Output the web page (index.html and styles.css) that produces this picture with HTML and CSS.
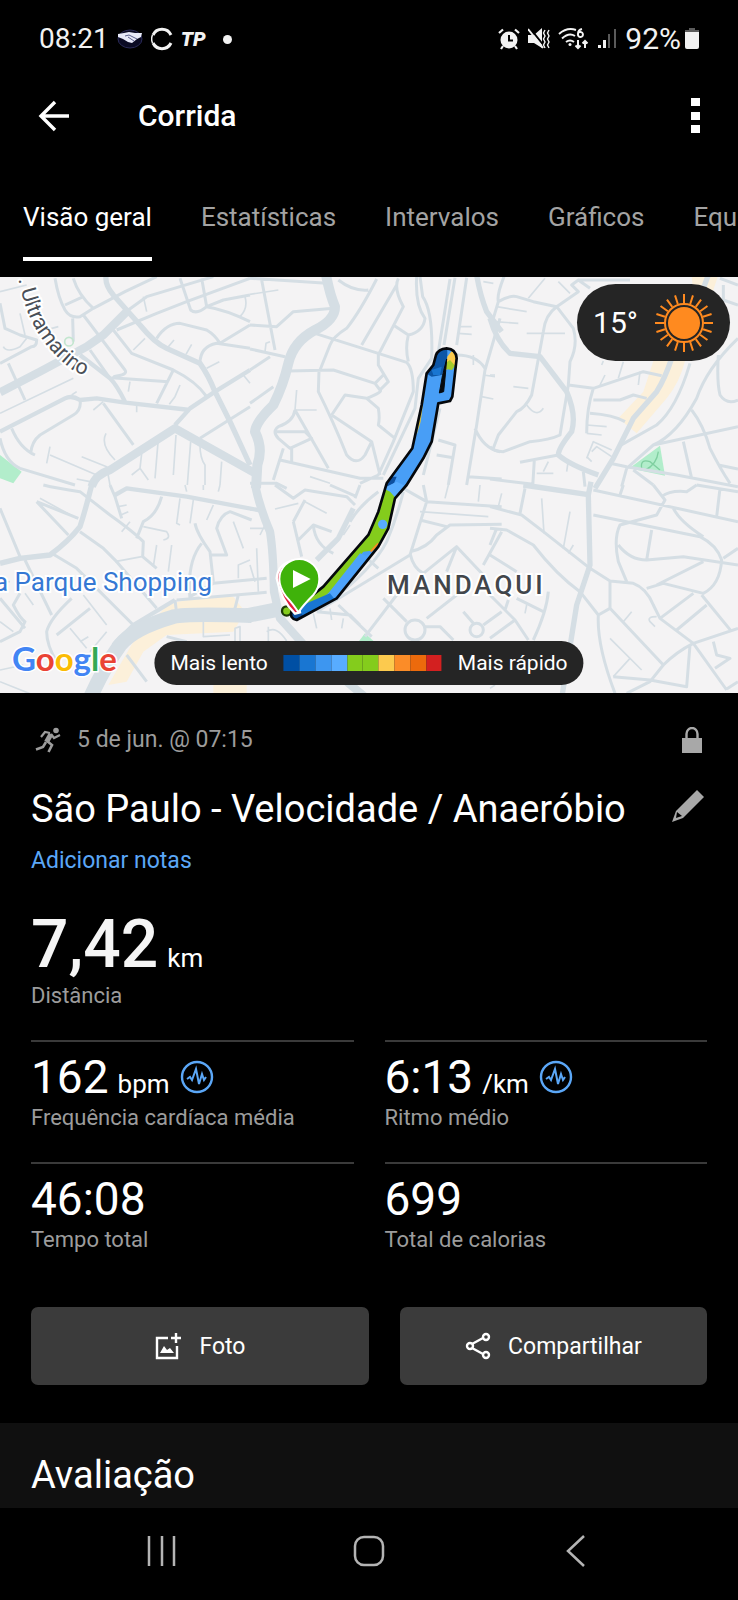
FILE: index.html
```html
<!DOCTYPE html>
<html lang="pt-BR">
<head>
  <meta charset="UTF-8">
  <meta name="viewport" content="width=device-width, initial-scale=1.0">
  <title>Corrida</title>
  <link rel="stylesheet" href="styles.css">
</head>
<body>
  <div class="status-bar">
    <div class="status-left">
      <span class="clock">08:21</span>
      <svg class="status-shake" width="26" height="20" viewBox="0 0 26 20">
        <ellipse cx="13" cy="10" rx="12" ry="9" fill="#0b0b24" stroke="#2b2b58" stroke-width="1"/>
        <path d="M1 5 L7 4 L12 3 L18 4 L25 4 L24 8 L20 10 L15 14 L11 13 L6 10 L1 8 Z" fill="#e8eafa"/>
        <path d="M8 7 L12 6 L20 10 M11 8 L17 12" fill="none" stroke="#5a5f8c" stroke-width="1"/>
      </svg>
      <svg width="22" height="24" viewBox="1 0 22 24" fill="none" stroke="#f2f2f2" stroke-width="3">
        <path d="M3 8 A10 10 0 0 1 21 8"/>
        <path d="M3 16 A10 10 0 0 0 21 16"/>
        <path d="M2.500 8 A10 10 0 0 0 2.500 16" stroke-width="1.500"/>
      </svg>
      <span class="tp">TP</span>
      <span class="dot"></span>
    </div>
    <div class="status-right">
      <svg width="22" height="22" viewBox="0 0 22 22">
        <circle cx="11" cy="12" r="8.500" fill="#f2f2f2"/>
        <path d="M1 5 L5 1.500 M21 5 L17 1.500 M5 18 L3 21 M17 18 L19 21" stroke="#f2f2f2" stroke-width="2.200"/>
        <path d="M11 7 V12.500 H15" fill="none" stroke="#000" stroke-width="2"/>
      </svg>
      <svg width="22" height="22" viewBox="0 0 22 22">
        <path d="M0 7 H6 L14 0 V20 L6 15 H0 Z" fill="#f2f2f2"/>
        <path d="M1 -1 L17 19" stroke="#000" stroke-width="2"/>
        <path d="M0 1 L15 20" stroke="#f2f2f2" stroke-width="2"/>
        <path d="M17 2 l-1.500 3 l1.500 3 l-1.500 3 l1.500 3 l-1.500 3 l1.500 3 M21 2 l-1.500 3 l1.500 3 l-1.500 3 l1.500 3 l-1.500 3 l1.500 3" fill="none" stroke="#f2f2f2" stroke-width="1.400"/>
      </svg>
      <svg width="31" height="22" viewBox="0 0 31 22" fill="none" stroke="#f2f2f2" stroke-width="2">
        <path d="M1 6 Q9 -1 18 2 M4 10.500 Q11 4 17 8 M8 14 Q12 11 16 14"/>
        <circle cx="12" cy="16.500" r="1.500" fill="#f2f2f2" stroke="none"/>
        <path d="M24 1 Q20 2 20 6 A2.500 2.500 0 1 0 21 4.500"/>
        <path d="M20 12 V20 M17.500 17.500 L20 20 L22.500 17.500 M27 20 V13 M24.500 15.500 L27 13 L29.500 15.500"/>
      </svg>
      <svg width="20" height="20" viewBox="0 0 20 20">
        <path d="M1 16h3v3H1z M6 11h3v8H6z" fill="#f2f2f2"/>
        <path d="M11 5h2v14h-2z M17 0h2v19h-2z" fill="#5a5a5a"/>
      </svg>
      <div class="battery">
        <span>92%</span>
        <svg width="14" height="22" viewBox="0 0 14 22">
          <path d="M4 0h6v2h4v4H0V2h4z" fill="#5c5c5c"/>
          <path d="M0 4H14V19Q14 21 12 21H2Q0 21 0 19Z" fill="#f2f2f2"/>
        </svg>
      </div>
    </div>
  </div>

  <header class="app-bar">
    <button class="icon-button" aria-label="Voltar">
      <svg width="32" height="32" viewBox="0 0 32 32" fill="none" stroke="#fff" stroke-width="3.400">
        <path d="M31 16 H3 M17 2 L3 16 L17 30"/>
      </svg>
    </button>
    <h1>Corrida</h1>
    <button class="icon-button" aria-label="Mais opções">
      <svg width="10" height="36" viewBox="0 0 10 36" fill="#fff">
        <path d="M1 0h9v8H1z M1 14h9v8H1z M1 27h9v8H1z"/>
      </svg>
    </button>
  </header>

  <nav class="tabs">
    <a class="tab active" href="#">Visão geral</a>
    <a class="tab" href="#">Estatísticas</a>
    <a class="tab" href="#">Intervalos</a>
    <a class="tab" href="#">Gráficos</a>
    <a class="tab" href="#">Equipamento</a>
  </nav>

  <section class="map">
    <svg class="map-canvas" viewBox="0 0 738 416">
      <defs>
        <path id="street" d="M48 -45 Q58 60 95 138 Q138 225 215 283 Q240 300 290 310"/>
        <clipPath id="route-clip">
          <path d="M590 220 Q565 222 558 240 L550 270 L530 295 L515 390 L487 520 L410 625 L385 710 L355 780 L220 935 L125 1010 Q118 1030 140 1035 L260 970 L385 815 L415 760 L435 670 L470 630 L520 550 L545 500 L565 385 L600 378 L607 365 L620 250 Q618 222 590 220 Z"/>
        </clipPath>
      </defs>

      <!-- north west -->
      <g class="tile" transform="translate(0 -2) scale(.33333)">
        <path class="park" d="M0 540 L65 590 L40 625 L0 610Z"/>
        <path class="lane" d="M0 415 L220 310 M0 50 L80 30 M10 215 Q20 235 60 215 L80 190 M60 115 L75 180 M120 170 L175 155 M540 330 L525 365 L508 388 M280 405 L310 380 M430 65 L440 110 M390 320 L385 350 M410 390 V412 M400 225 L435 190 M505 215 L522 195 M558 238 L575 208 M620 280 L658 260 M475 490 L465 610 M528 480 L520 600 M572 500 L562 630 M600 510 Q600 550 615 570 L615 630 M665 560 L660 630 M425 535 L420 580 L395 600 M420 580 L445 615 M318 475 Q300 510 345 555 M150 540 L290 600 M150 515 L140 565 M245 545 L320 575 L330 630 M215 360 L230 350 M735 65 Q745 100 720 125 M730 300 L750 325 M230 612 L270 620"/>
        <path class="road" d="M25 265 L75 375 M340 165 L395 235 L520 285 Q590 320 620 365 M250 120 L375 285 Q385 300 340 305 M270 225 L330 310 M335 308 L505 320 M520 285 L470 385 M310 385 L400 510 M165 10 Q175 70 195 105 Q210 130 240 125 L280 100 L375 50 L470 5 M220 10 Q235 60 280 100 M195 90 L250 65 M218 130 L220 200 M0 85 L15 160 L60 180 L110 195 Q110 215 95 215 L0 265 M350 165 L470 115 L560 80 L750 10 M385 105 L440 65 L640 5 M470 190 Q500 145 540 145 L620 165 Q645 180 660 205 L750 150 M600 265 Q600 215 650 205 L750 220 M540 10 L572 105 Q590 120 620 95 L605 10 M620 95 L670 75 L750 60 M620 95 Q680 105 750 140 M600 490 L750 395 M0 490 Q15 560 60 580 L225 630 M240 375 Q245 405 220 420 L120 480 Q95 500 92 535 M35 460 Q60 520 105 540"/>
        <path class="road wide" d="M0 470 L195 370 Q215 360 240 375 L290 370 L370 382 L570 405 M240 240 L330 310 Q350 330 375 380 M525 450 L570 400 L645 350 L750 285"/>
        <path class="road avenue" d="M318 5 Q315 30 340 60 L420 150 Q465 205 500 220 L600 265 Q625 300 645 350 L690 440 L750 570"/>
        <path class="road artery" d="M0 352 L120 290 L260 215 L310 180 L385 105 M275 635 Q285 600 330 585 L525 460 L775 600"/>
        <circle cx="207" cy="200" r="13" fill="none" stroke="#c3e6cf" stroke-width="5"/>
      </g>

      <!-- north centre -->
      <g class="tile" transform="translate(250 -2) scale(.33333)">
        <path class="lane" d="M0 58 L85 45 M45 230 L48 205 L60 200 M625 155 L665 155 M625 175 L665 178 M700 300 L735 305 M695 365 L730 372 M140 345 L135 405 L200 405 M670 270 V240 M180 605 L240 625 M700 20 L730 25"/>
        <path class="road" d="M0 10 L230 25 M35 15 L75 225 M0 150 L80 155 L130 110 L250 100 M0 222 L105 245 M0 285 L60 245 M0 385 L70 335 M195 175 L470 262 Q490 280 490 350 L430 500 L385 600 L330 625 M115 288 L250 285 L375 325 M207 288 L205 350 Q250 440 290 540 Q320 575 345 540 L365 500 M265 15 Q310 50 355 45 M380 12 Q330 110 290 160 Q250 185 240 210 L210 285 M440 30 L335 210 M445 10 Q430 40 460 95 L385 240 L385 270 L415 320 L390 345 L375 325 L400 300 M390 345 Q400 350 350 370 L285 360 L245 420 M350 370 L385 400 Q390 430 385 450 L435 490 M245 420 L365 500 L390 600 M430 150 L475 180 Q520 170 525 130 Q495 90 500 5 M475 180 Q465 220 475 260 M510 5 L518 65 Q550 110 545 250 L505 310 L495 400 L400 600 M600 12 L565 230 M615 8 L582 210 M650 8 L620 210 M620 240 Q680 240 705 280 M750 130 L705 285 L680 450 L650 630 M675 460 Q700 520 750 530 M135 405 L235 580 M135 405 Q130 440 85 455 Q65 470 85 490 L120 520 L185 490 L165 470 L80 470 M100 520 L70 615 M125 520 V560 M90 555 L330 610 L400 610 M0 625 L80 625 L110 640 M565 495 L615 510 L595 630 M560 540 L610 548 M570 400 L520 600 M655 605 L755 612"/>
        <path class="road avenue" d="M680 0 Q690 60 710 110 L755 170"/>
        <path class="road boulevard" d="M228 0 Q240 60 255 95 Q255 135 195 165 Q130 200 115 265 Q100 330 70 390 Q18 440 15 470 Q40 520 22 570 L18 640"/>
      </g>

      <!-- north east -->
      <g class="tile" transform="translate(490 -2) scale(.33333)">
        <path class="sand" d="M490 258 L585 258 Q570 320 530 370 L440 475 L385 430 L460 350Z M605 0 H685 L665 60 H610Z"/>
        <path class="park" d="M418 580 L510 512 L525 602Z"/>
        <path class="lane" d="M20 95 L110 110 M15 140 L85 145 M110 175 L225 175 M70 335 L115 340 M110 390 Q140 430 160 400 M450 290 L445 330 M290 450 L350 455 M290 475 L335 480 M340 258 L335 270 M345 300 L330 330 M400 260 L385 310 M115 70 L165 10 M205 20 L240 55 M0 300 H15 M290 550 L310 500 L365 525 M290 545 L305 560 M305 530 L320 515 L365 545 M175 560 L160 590 M140 595 L190 595 M230 590 L235 555"/>
        <path d="M455 580 Q450 550 480 560 L510 585 M465 585 Q500 570 505 530" fill="none" stroke="#7fcfa0" stroke-width="4"/>
        <path class="road" d="M42 5 Q20 60 25 80 L10 130 M25 80 Q60 60 80 65 L130 80 L200 95 Q165 120 160 170 L125 360 Q105 400 80 410 L25 480 L10 520 M200 95 L265 50 L245 30 L265 15 L300 40 M200 95 L250 160 Q265 210 240 260 L235 330 L210 480 Q180 495 120 500 L40 530 Q10 530 0 515 M235 330 L310 340 L460 290 L515 302 M310 340 Q290 400 290 475 M310 375 L390 375 L430 360 L470 370 M300 415 Q370 420 405 440 M600 265 Q560 400 500 450 L390 512 M744 190 Q650 280 620 370 Q560 480 490 510 L410 580 M490 510 L744 455 M685 240 Q680 320 690 360 Q710 390 744 375 M605 405 Q640 450 660 520 Q690 580 720 625 M580 500 L605 610 M360 565 L410 575 L560 600 L744 635 M410 580 L395 635 M430 585 L490 630 M685 570 L744 582 M90 562 L205 540 M133 555 L128 635 M280 590 L285 635 M0 612 L130 628 M265 15 L420 15 M700 30 V75 L744 90 M690 10 L744 30"/>
        <path class="road avenue" d="M0 130 Q20 200 60 235 L150 245 L230 350 Q260 420 245 470 Q205 520 205 540 Q240 570 325 600 M545 250 Q525 310 500 350 L430 430 L370 550 L315 640 M655 0 L640 40"/>
      </g>

      <!-- south west -->
      <g class="tile" transform="translate(0 208) scale(.33333)">
        <path class="sand" d="M500 362 Q560 335 700 335 L735 380 L700 440 L500 450 L430 500 L380 590 L325 600 L400 470Z M640 600 H740 V630 H640Z"/>
        <path class="lane" d="M120 40 L230 100 M430 125 L500 140 Q515 160 490 165 M345 230 L425 215 M540 40 L530 115 L540 120 M580 45 L570 115 M640 60 L620 105 M700 110 L730 190 M470 180 L460 245 M515 180 L505 260 M555 0 L560 20 M610 0 V15 M660 0 L655 20 M355 65 L380 60 M362 90 L385 80 M365 140 L390 110 M75 325 L100 360 M0 410 L40 440 M250 330 L320 420 M320 440 L270 500 M210 430 L260 490 M240 470 L265 455 M0 555 L70 540 M0 590 L100 630 M610 410 V455 L690 450 M0 290 H30 M705 470 V430 L720 425 V468 M750 225 L715 240 V280"/>
        <path class="road" d="M330 0 L345 35 L365 100 M130 0 Q170 10 240 20 L330 90 Q400 140 430 170 L428 215 L470 250 M110 50 L205 150 M110 50 L235 100 M485 35 Q470 90 430 110 L410 160 M240 140 L310 190 L350 230 L470 370 M155 205 L230 250 L290 310 L400 420 M75 225 L155 390 M0 70 L60 215 M570 340 Q560 230 605 175 M585 115 Q590 145 630 200 L640 290 M630 210 L680 210 L650 130 Q660 90 690 80 L755 105 M570 335 L640 295 L800 280 M530 345 L800 322 M0 340 L75 430 M60 325 L40 360 Q60 400 75 410 L60 440 L0 470 M215 340 Q150 400 140 440 Q140 480 170 530 M170 450 L270 370 M525 345 L530 385 M380 510 L440 590 M715 330 L705 370 L690 385 M500 455 L560 470"/>
        <path class="road wide" d="M345 30 L380 10 L560 35 L780 76 M525 345 L400 420 L340 480"/>
        <path class="road avenue" d="M275 0 Q255 80 240 125 Q205 170 150 210 L60 220 L0 235"/>
        <path class="road highway" d="M755 392 Q560 385 520 395 Q400 430 360 480 Q310 550 270 640"/>
      </g>

      <!-- south centre -->
      <g class="tile" transform="translate(250 208) scale(.33333)">
        <path class="park" d="M322 475 L345 445 L378 475Z"/>
        <path class="lane" d="M75 72 L145 55 M165 50 L230 85 M0 75 H30 M0 130 H50 M20 190 L25 320 M0 240 L15 290 M510 80 L715 95 M280 400 L275 430 M190 385 L200 430 M240 370 L245 405 M595 0 L585 40 M690 0 L685 50 M50 440 Q80 420 110 468 M55 425 V468 M300 120 L280 150 M30 150 L45 120"/>
        <path class="road" d="M75 0 L130 40 L165 15 L290 35 L315 60 M130 110 L165 45 M130 110 L155 215 M145 165 L190 120 L245 140 M190 120 Q195 180 250 205 M385 20 Q330 60 300 110 M330 0 L315 40 M240 0 L320 35 M460 20 Q440 100 410 170 Q370 250 240 350 M460 10 L530 50 L755 65 M530 50 L480 210 L200 380 M480 200 Q530 190 560 150 L600 120 L755 118 M510 105 L590 125 M520 0 L530 50 M480 205 Q490 250 520 265 L620 185 L700 270 M620 185 L590 260 M755 140 L700 240 M345 215 L385 250 M440 330 L345 455 M265 360 L365 455 M400 340 L470 410 M520 425 L570 425 L610 465 M700 420 L755 380 M640 380 L670 415 M530 400 L620 330 M200 380 L300 390 L330 420"/>
        <circle class="road" cx="495" cy="435" r="30"/>
        <circle class="road" cx="680" cy="435" r="20"/>
        <path class="road avenue" d="M310 70 L265 160 L200 225"/>
        <path class="road artery" d="M15 0 Q30 70 60 140 Q70 200 72 320 L90 400 L180 500 M290 590 L350 640"/>
        <path class="road highway" d="M-10 392 L90 372"/>
      </g>

      <!-- south east -->
      <g class="tile" transform="translate(490 208) scale(.33333)">
        <path class="lane" d="M35 25 L25 65 M155 40 L162 145 M240 80 L220 190 M235 205 L250 180 M400 410 L425 380 M360 460 L455 555 M420 520 L370 575 M500 395 Q470 395 480 410 L495 425 M110 360 L105 385 M0 610 L15 600"/>
        <path class="road" d="M310 15 L744 110 M310 90 L630 155 Q680 180 695 225 Q690 300 640 325 L520 295 L470 310 M0 65 L95 90 L160 140 L300 250 L360 288 L430 295 Q470 310 490 360 L510 400 L610 475 L710 615 M0 130 L50 135 L130 180 Q200 270 270 320 L325 390 Q320 480 375 625 M360 290 L360 370 L325 390 M360 370 L520 540 M105 10 L90 85 M490 0 L525 45 L500 90 L390 120 Q370 160 385 230 L410 290 M385 180 Q420 225 470 225 L580 215 L744 240 M485 135 L470 225 M550 70 Q570 110 640 155 M515 35 Q540 15 590 20 L620 0 M620 0 L744 20 M690 10 L680 95 M400 0 L390 30 M700 220 L744 190 M500 300 L640 230 M610 325 L510 400 M650 360 L560 435 M635 330 L725 440 M744 430 L610 475 Q560 500 520 540 L480 590 L410 625 M370 575 L480 585 L590 605 L600 480 M710 612 L744 590 M670 470 L680 510 L720 520 L675 550 M0 210 L80 260 M80 340 L160 380 M175 320 Q170 380 130 465 M0 330 L75 405 L115 465 M75 405 L0 460 M0 180 L20 130 M55 345 L45 375"/>
        <path class="road avenue" d="M100 0 L290 28 M303 -10 L295 30 L300 240 L260 360 L215 640"/>
      </g>

      <!-- map labels -->
      <g transform="translate(0 -2) scale(.33333)">
        <text class="label-street"><textPath href="#street" startOffset="58">. Ultramarino</textPath></text>
      </g>
      <text class="label-place" x="212" y="314" text-anchor="end">a Parque Shopping</text>
      <text class="label-district" x="387" y="317">MANDAQUI</text>
      <text class="label-google" x="12" y="394"><tspan fill="#4285f4">G</tspan><tspan fill="#ea4335">o</tspan><tspan fill="#fbbc05">o</tspan><tspan fill="#4285f4">g</tspan><tspan fill="#34a853">l</tspan><tspan fill="#ea4335">e</tspan></text>

      <!-- route coloured by pace -->
      <g transform="translate(250 -2) scale(.33333)">
        <circle cx="110" cy="1008" r="14" fill="#84cc1c" stroke="#1c3a05" stroke-width="7"/>
        <g clip-path="url(#route-clip)">
          <rect x="90" y="200" width="550" height="850" fill="#489ef6"/>
          <path d="M540 200 H592 V262 L575 300 L545 305 L520 290Z" fill="#0d56a6"/>
          <path d="M545 285 L575 275 L570 300 L550 300Z" fill="#1976d2"/>
          <path d="M592 245 L605 228 L620 240 L616 270 L588 285Z" fill="#fcca4e"/>
          <path d="M590 262 L600 255 L615 272 L606 285 L588 282Z" fill="#a5cc2b"/>
          <path d="M518 350 L524 350 L512 440 L500 480Z" fill="#d9c341"/>
          <path d="M400 640 L415 605 L440 605 L432 625 L405 640Z" fill="#0d4f9f"/>
          <path d="M380 640 L415 640 L440 662 L470 640 L420 770 L380 825 L340 830 L240 950 L150 1030 L100 1000 L360 750Z" fill="#84cc1c"/>
          <path d="M400 640 L440 620 L480 640 L440 672 L420 650Z" fill="#58acff"/>
          <circle cx="398" cy="748" r="14" fill="#58acff"/>
          <path d="M330 835 L348 842 L400 820 L265 985 L130 1045 L200 985 L235 955Z" fill="#4da3fb"/>
          <path d="M240 955 L260 980 L130 1050 L110 1020 L170 985Z" fill="#1976d2"/>
          <path d="M120 1010 L150 1010 L165 1030 L120 1045Z" fill="#0d4f9f"/>
          <path d="M362 830 L385 805" stroke="#fb8c28" stroke-width="6"/>
        </g>
        <path d="M590 220 Q565 222 558 240 L550 270 L530 295 L515 390 L487 520 L410 625 L385 710 L355 780 L220 935 L125 1010 Q118 1030 140 1035 L260 970 L385 815 L415 760 L435 670 L470 630 L520 550 L545 500 L565 385 L600 378 L607 365 L620 250 Q618 222 590 220 Z" fill="none" stroke="#05080c" stroke-width="8" stroke-linejoin="round"/>
        <path d="M590 252 Q576 300 568 354 L581 350 L586 300Z" fill="#05080c" stroke="#05080c" stroke-width="3"/>
        <path d="M135 1016 Q92 975 80 910 Q84 870 120 860 L150 1012Z" fill="#e0203c" stroke="#fff" stroke-width="7"/>
        <path d="M145 1012 Q132 990 108 964 Q88 938 88 912 A60 60 0 0 1 208 912 Q208 938 190 960 Q160 990 145 1012Z" fill="#3fb20a" stroke="#fff" stroke-width="6"/>
        <path d="M129 885 L182 912 L129 939Z" fill="#fff"/>
      </g>
    </svg>

    <div class="weather">
      <span>15°</span>
      <svg width="60" height="60" viewBox="-30 -30 60 60" fill="none" stroke="#ff8a1f" stroke-width="2">
        <circle r="16" fill="#ff8a1f" stroke="none"/>
        <circle r="19"/>
        <path id="rays" d="M0 -20V-29 M0 20V29 M-20 0H-29 M20 0H29"/>
        <use href="#rays" transform="rotate(18)"/>
        <use href="#rays" transform="rotate(36)"/>
        <use href="#rays" transform="rotate(54)"/>
        <use href="#rays" transform="rotate(72)"/>
      </svg>
    </div>

    <div class="legend">
      <span>Mais lento</span>
      <div class="scale">
        <i class="s1"></i><i class="s2"></i><i class="s3"></i><i class="s4"></i><i class="s5"></i><i class="s5"></i><i class="s6"></i><i class="s7"></i><i class="s8"></i><i class="s9"></i>
      </div>
      <span>Mais rápido</span>
    </div>
  </section>

  <main class="activity">
    <div class="date-row">
      <svg width="26" height="26" viewBox="0 0 26 26" fill="none" stroke="#9c9c9c">
        <circle cx="21" cy="3.500" r="2.800" fill="#9c9c9c" stroke="none"/>
        <path d="M6 10 L10 5 L15 6" stroke-width="2.200"/>
        <path d="M16 7 L11.500 15" stroke-width="5"/>
        <path d="M16 7 L19 11 L25 8" stroke-width="2.200"/>
        <path d="M12 14 L17 18 L13.500 25" stroke-width="2.600"/>
        <path d="M11 15 L8 20 L1 22.500" stroke-width="2.600"/>
      </svg>
      <span class="date">5 de jun. @ 07:15</span>
      <svg class="lock" width="20" height="26" viewBox="0 0 20 26">
        <path d="M4.500 12 V7 A5.500 6 0 0 1 15.500 7 V12" fill="none" stroke="#a8a8a8" stroke-width="2.400"/>
        <rect x="0" y="11" width="20" height="15" fill="#a8a8a8"/>
      </svg>
    </div>

    <div class="title-row">
      <h2>São Paulo - Velocidade / Anaeróbio</h2>
      <button class="icon-button" aria-label="Editar">
        <svg width="32" height="38" viewBox="0 0 32 38">
          <path d="M25 0 L32 7 L11 28 L0 32 L4 21 Z" fill="#a8a8a8"/>
          <path d="M5 22 L10 26 L4 28 Z" fill="#000"/>
        </svg>
      </button>
    </div>
    <a class="notes" href="#">Adicionar notas</a>

    <div class="distance">
      <div class="value"><strong>7,42</strong><span class="unit">km</span></div>
      <div class="label">Distância</div>
    </div>

    <div class="metrics">
      <div class="metric">
        <div class="value">162<span class="unit">bpm</span>
          <svg class="pulse" width="34" height="34" viewBox="0 0 34 34"><use href="#pulse-icon"/></svg>
        </div>
        <div class="label">Frequência cardíaca média</div>
      </div>
      <div class="metric">
        <div class="value">6:13<span class="unit">/km</span>
          <svg class="pulse" width="34" height="34" viewBox="0 0 34 34">
            <g id="pulse-icon" fill="none" stroke="#5ba7f7" stroke-width="2.400">
              <circle cx="17" cy="17" r="15"/>
              <path d="M7 19 L10 17 L12 20 L16 9 L19 24 L22 14 L24 20 L26 17" stroke-width="2"/>
            </g>
          </svg>
        </div>
        <div class="label">Ritmo médio</div>
      </div>
      <div class="metric">
        <div class="value">46:08</div>
        <div class="label">Tempo total</div>
      </div>
      <div class="metric">
        <div class="value">699</div>
        <div class="label">Total de calorias</div>
      </div>
    </div>

    <div class="actions">
      <button class="action">
        <svg width="28" height="28" viewBox="0 0 28 28" fill="none" stroke="#fff" stroke-width="2.400">
          <path d="M14 6 H3 V26 H23 V14 M22 1 V11 M17 6 H27"/>
          <path d="M6 21 L10 14 L13 18 L16 16 L20 21 Z" fill="#fff" stroke="none"/>
        </svg>
        Foto
      </button>
      <button class="action">
        <svg width="26" height="28" viewBox="0 0 26 28" fill="none" stroke="#fff" stroke-width="2.400">
          <path d="M7 12 L18 6 M7 16 L18 22"/>
          <circle cx="5" cy="14" r="3"/>
          <circle cx="21" cy="5" r="3"/>
          <circle cx="21" cy="23" r="3"/>
        </svg>
        Compartilhar
      </button>
    </div>
  </main>

  <section class="rating">
    <h2>Avaliação</h2>
  </section>

  <footer class="nav-bar">
    <button class="icon-button" aria-label="Recentes">
      <svg width="30" height="32" viewBox="0 0 30 32" stroke="#b4b4b4" stroke-width="2.500">
        <path d="M2 1 V31 M15 1 V31 M27 1 V31"/>
      </svg>
    </button>
    <button class="icon-button" aria-label="Início">
      <svg width="32" height="32" viewBox="0 0 32 32" fill="none" stroke="#b4b4b4" stroke-width="2.500">
        <rect x="2" y="2" width="28" height="28" rx="9"/>
      </svg>
    </button>
    <button class="icon-button" aria-label="Voltar">
      <svg width="20" height="32" viewBox="0 0 20 32" fill="none" stroke="#b4b4b4" stroke-width="2.500">
        <path d="M18 1 L2 16 L18 31"/>
      </svg>
    </button>
  </footer>
</body>
</html>
```
FILE: styles.css
```css
* {
  box-sizing: border-box;
}
body {
  margin: 0;
  background-color: #000;
  color: #fff;
  font-family: Roboto, "Liberation Sans", sans-serif;
  font-size: 23px;
  line-height: 28px;
}
h1, h2 {
  margin: 0;
}
svg {
  display: block;
  flex-shrink: 0;
}
button {
  font-family: inherit;
  color: inherit;
  border: none;
  cursor: pointer;
}
.icon-button {
  padding: 0;
  background: none;
}

/* status bar */
.status-bar {
  display: flex;
  justify-content: space-between;
  align-items: center;
  height: 78px;
  padding: 0 39px;
  font-size: 28px;
  color: #f2f2f2;
}
.status-left, .status-right {
  display: flex;
  align-items: center;
  gap: 8px;
}
.tp {
  font-size: 20px;
  font-weight: 900;
  font-style: italic;
}
.dot {
  width: 9px;
  height: 9px;
  margin-left: 9px;
  border-radius: 50%;
  background-color: #f2f2f2;
}
.battery {
  display: flex;
  align-items: center;
  gap: 4px;
  font-size: 30px;
}

/* app bar */
.app-bar {
  display: flex;
  align-items: center;
  height: 76px;
  padding: 0 38px;
}
.app-bar h1 {
  flex: 1;
  margin-left: 68px;
  font-size: 30px;
  font-weight: 500;
}
.tabs {
  display: flex;
  gap: 49px;
  padding: 47px 0 16px 23px;
  overflow: hidden;
}
.tab {
  padding-bottom: 24px;
  border-bottom: 4px solid transparent;
  font-size: 26px;
  line-height: 32px;
  color: #a3a3a3;
  text-decoration: none;
  white-space: nowrap;
}
.tab.active {
  color: #fff;
  border-color: #fff;
}

/* map */
.map {
  position: relative;
  overflow: hidden;
  background-color: #f4f3f4;
}
.map-canvas {
  width: 100%;
  height: auto;
}
.road, .lane {
  fill: none;
  stroke: #d5dee4;
  stroke-linejoin: round;
}
.lane {
  stroke-width: 5;
}
.road {
  stroke-width: 9;
}
.wide {
  stroke-width: 13;
}
.avenue {
  stroke-width: 16;
}
.artery {
  stroke-width: 25;
}
.boulevard {
  stroke-width: 30;
}
.highway {
  stroke-width: 44;
}
.park {
  fill: #b2edcb;
}
.sand {
  fill: #fcf0da;
}
.label-street {
  font-size: 64px;
  fill: #4a4f57;
  stroke: #fff;
  stroke-width: 12px;
  paint-order: stroke;
}
.label-place {
  font-size: 26px;
  fill: #3578d4;
  stroke: #fff;
  stroke-width: 4px;
  paint-order: stroke;
}
.label-district {
  font-size: 26px;
  font-weight: 500;
  letter-spacing: 3px;
  fill: #42464b;
  stroke: #fff;
  stroke-width: 4px;
  paint-order: stroke;
}
.label-google {
  font-family: Lato, Roboto, sans-serif;
  font-size: 33px;
  font-weight: 700;
  stroke: #fff;
  stroke-width: 3px;
  paint-order: stroke;
}
.weather {
  position: absolute;
  top: 7px;
  right: 8px;
  display: flex;
  align-items: center;
  gap: 16px;
  height: 77px;
  padding: 0 16px;
  border-radius: 39px;
  background-color: #252525;
  font-size: 30px;
}
.legend {
  position: absolute;
  bottom: 8px;
  left: 50%;
  transform: translateX(-50%);
  display: flex;
  align-items: center;
  gap: 16px;
  height: 44px;
  padding: 0 16px;
  border-radius: 22px;
  background-color: #252525;
  font-size: 21px;
  white-space: nowrap;
}
.scale {
  display: flex;
  width: 158px;
  height: 16px;
}
.scale i {
  flex: 1;
}
.s1 { background-color: #004fa3; }
.s2 { background-color: #1976d2; }
.s3 { background-color: #3d96f0; }
.s4 { background-color: #58acff; }
.s5 { background-color: #84cc1c; }
.s6 { background-color: #fcca4e; }
.s7 { background-color: #fb8c28; }
.s8 { background-color: #ec6a0c; }
.s9 { background-color: #d32020; }

/* activity */
.activity {
  padding: 33px 31px 38px;
}
.date-row {
  display: flex;
  align-items: center;
  padding: 0 5px 0 4px;
  color: #9c9c9c;
}
.date {
  flex: 1;
  margin-left: 16px;
}
.title-row {
  display: flex;
  justify-content: space-between;
  align-items: center;
  margin: 32px 3px 15px 0;
}
h2 {
  font-size: 38px;
  font-weight: 400;
  line-height: 46px;
}
.notes {
  display: block;
  color: #5ba7f7;
  text-decoration: none;
}
.label {
  font-size: 22px;
  line-height: 30px;
  color: #9c9c9c;
}
.unit {
  margin-left: 9px;
  font-size: 26px;
  line-height: 28px;
}
.distance {
  margin: 34px 0 29px;
}
.distance .value {
  display: flex;
  align-items: baseline;
  line-height: 72px;
}
.distance strong {
  font-size: 66px;
  font-weight: 500;
  color: #f5f5f5;
}
.metrics {
  display: grid;
  grid-template-columns: 1fr 1fr;
  gap: 29px 31px;
}
.metric {
  padding-top: 9px;
  border-top: 2px solid #3a3a3a;
}
.metric .value {
  display: flex;
  align-items: baseline;
  font-size: 46px;
  line-height: 52px;
}
.pulse {
  align-self: center;
  margin-left: 10px;
}
.actions {
  display: grid;
  grid-template-columns: 11fr 10fr;
  gap: 31px;
  margin-top: 52px;
}
.action {
  display: flex;
  justify-content: center;
  align-items: center;
  gap: 17px;
  height: 78px;
  border-radius: 7px;
  background-color: #3b3b3b;
  font-size: 23px;
}

.rating {
  padding: 29px 31px 10px;
  background-color: #101010;
}
.nav-bar {
  display: grid;
  grid-template-columns: repeat(3, 1fr);
  justify-items: center;
  align-items: center;
  height: 92px;
  padding: 0 58px 6px;
}
```
